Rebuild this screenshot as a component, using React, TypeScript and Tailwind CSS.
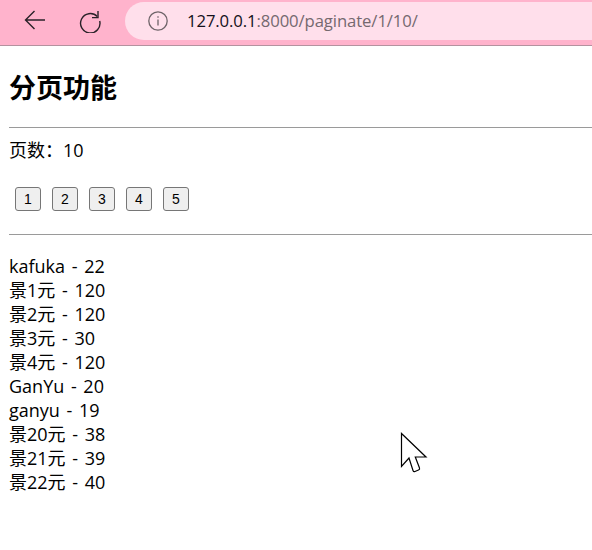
import React from 'react';

const pages = [1, 2, 3, 4, 5];

const rows = [
  'kafuka - 22',
  '景1元 - 120',
  '景2元 - 120',
  '景3元 - 30',
  '景4元 - 120',
  'GanYu - 20',
  'ganyu - 19',
  '景20元 - 38',
  '景21元 - 39',
  '景22元 - 40',
];

const BrowserBar: React.FC = () => (
  <div className="h-[46px] bg-[#ffb3cc] border-b border-[#b4929f] flex items-start pl-[23px] font-['Open_Sans','Noto_Sans_CJK_SC',sans-serif]">
    {/* back */}
    <svg width="24" height="24" viewBox="0 0 24 24" className="mt-[8px] text-[#2a2228]" fill="none" stroke="currentColor" strokeWidth="1.4">
      <path d="M22 12H2.5M11.5 3L2.5 12l9 9" />
    </svg>
    {/* reload */}
    <svg width="24" height="24" viewBox="0 0 24 24" className="mt-[9px] ml-[31px] text-[#2a2228]" fill="none" stroke="currentColor" strokeWidth="1.4">
      <path d="M19.3 7.6A9.7 9.7 0 1 0 21.7 12" />
      <path d="M20 2v6.6h-6" />
    </svg>
    <div className="ml-[23px] mt-[2px] h-[38px] flex-1 bg-[#ffdfeb] rounded-l-[19px] flex items-center pl-[23px]">
      <svg width="20" height="20" viewBox="0 0 20 20" fill="none" stroke="#6f6469" strokeWidth="1.3">
        <circle cx="10" cy="10" r="9.2" />
        <path d="M10 8.5v6M10 5.2v1.6" />
      </svg>
      <span className="ml-[19px] text-[16.7px] tracking-[-0.1px] text-[#75696f]">
        <span className="text-[#14101a]">127.0.0.1</span>:8000/paginate/1/10/
      </span>
    </div>
  </div>
);

export default function App() {
  return (
    <div className="relative h-[550px] w-[592px] overflow-hidden bg-white text-black">
      <BrowserBar />
      <div className="pl-[9px] font-['Open_Sans','Noto_Sans_CJK_SC',sans-serif] text-[18px] leading-[24px] [word-spacing:2px]">
        <h1 className="text-[27px] leading-[32px] font-bold mt-[25px] font-['Noto_Sans_CJK_SC',sans-serif]">分页功能</h1>
        <hr className="mt-[24px] border-t border-[#9a9a9a] -mr-px" />
        <p className="mt-[10px]">页数：10</p>
        <div className="mt-[25px] ml-[6px] flex gap-[11px]">
          {pages.map(p => (
            <button
              key={p}
              className="w-[26px] h-[24px] bg-[#efefef] border border-[#767676] rounded-[3px] text-[14px] leading-none font-['Liberation_Sans',sans-serif]"
            >
              {p}
            </button>
          ))}
        </div>
        <hr className="mt-[23px] border-t border-[#9a9a9a]" />
        <div className="mt-[19px]">
          {rows.map(r => (
            <div key={r}>{r}</div>
          ))}
        </div>
      </div>
      {/* mouse pointer */}
      <svg width="28" height="42" viewBox="0 0 28 42" className="absolute left-[400px] top-[432px]" fill="white" stroke="black" strokeWidth="1.2">
        <path d="M1.5 1.5V34.5L9 26l4 12.5q.5 1.5 2 1l3.5-1.5q1.5-.6 1-2L15.3 25H26z" />
      </svg>
    </div>
  );
}
